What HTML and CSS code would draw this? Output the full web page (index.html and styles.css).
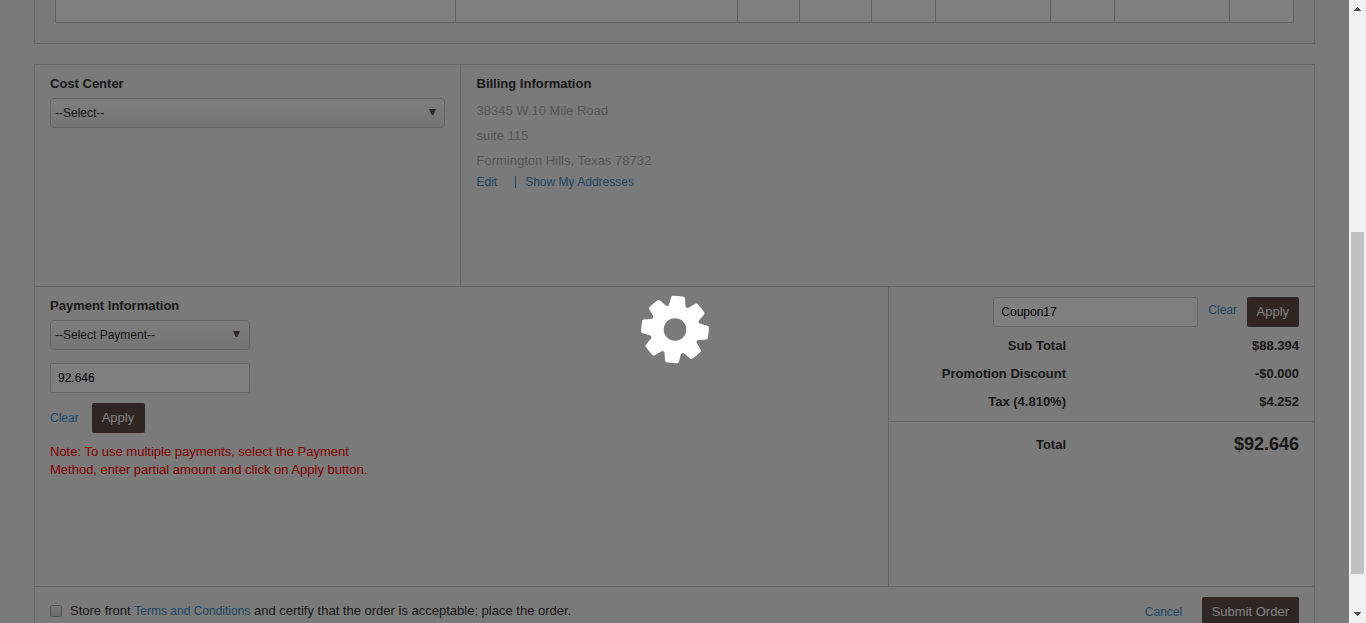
FILE: index.html
```html
<!DOCTYPE html>
<html lang="en">
<head>
<meta charset="utf-8">
<title>Checkout</title>
<link rel="stylesheet" href="styles.css">
</head>
<body>
<div class="window">
  <main class="page">
    <section class="items-panel">
      <div class="items-row"><i></i><i></i><i></i><i></i><i></i><i></i><i></i><i></i><i></i></div>
    </section>
    <section class="checkout">
      <div class="row-top">
        <div class="cost">
          <h2>Cost Center</h2>
          <div class="select"><span>--Select--</span><svg width="7" height="6" viewBox="0 0 7 6"><path d="M0 0H7L4.300 6H2.700Z" fill="#5f504c"/></svg></div>
        </div>
        <div class="billing">
          <h2>Billing Information</h2>
          <p>38345 W.10 Mile Road</p>
          <p>suite 115</p>
          <p>Formington Hills, Texas 78732</p>
          <div class="links"><a>Edit</a><span class="bar"></span><a>Show My Addresses</a></div>
        </div>
      </div>
      <div class="row-mid">
        <div class="payment">
          <h2>Payment Information</h2>
          <div class="select small"><span>--Select Payment--</span><svg width="7" height="6" viewBox="0 0 7 6"><path d="M0 0H7L4.300 6H2.700Z" fill="#5f504c"/></svg></div>
          <div class="field">92.646</div>
          <div class="actions"><a>Clear</a><span class="btn">Apply</span></div>
          <div class="note">Note: To use multiple payments, select the Payment<br>Method, enter partial amount and click on Apply button.</div>
        </div>
        <div class="totals">
          <div class="coupon"><div class="field">Coupon17</div><a>Clear</a><span class="btn">Apply</span></div>
          <div class="line"><span>Sub Total</span><b>$88.394</b></div>
          <div class="line"><span>Promotion Discount</span><b>-$0.000</b></div>
          <div class="line"><span>Tax (4.810%)</span><b>$4.252</b></div>
          <div class="line grand"><span>Total</span><b>$92.646</b></div>
        </div>
      </div>
      <div class="row-bottom">
        <span class="checkbox"></span>
        <div class="terms">Store front <a>Terms and Conditions</a> and certify that the order is acceptable; place the order.</div>
        <a class="cancel">Cancel</a>
        <span class="btn">Submit Order</span>
      </div>
    </section>
    <div class="overlay">
      <svg class="gear" width="70" height="70" viewBox="-35 -35.500 70 70">
        <defs>
          <path id="tooth" d="M-8.800 -22L-8 -25.500L-6.900 -32Q-6.600 -33.300 -5.300 -33.500Q0 -34 5.300 -33.500Q6.600 -33.300 6.900 -32L8 -25.500L8.800 -22Z"/>
          <mask id="hub"><rect x="-35" y="-36" width="70" height="71" fill="#fff"/><circle r="11.300" fill="#000"/></mask>
        </defs>
        <g fill="#fff" mask="url(#hub)">
          <circle r="25"/>
          <g transform="rotate(5.500)">
            <use href="#tooth"/>
            <use href="#tooth" transform="rotate(45)"/>
            <use href="#tooth" transform="rotate(90)"/>
            <use href="#tooth" transform="rotate(135)"/>
            <use href="#tooth" transform="rotate(180)"/>
            <use href="#tooth" transform="rotate(225)"/>
            <use href="#tooth" transform="rotate(270)"/>
            <use href="#tooth" transform="rotate(315)"/>
          </g>
        </g>
      </svg>
    </div>
  </main>
  <aside class="scrollbar">
    <svg width="7" height="4" viewBox="0 0 7 4" shape-rendering="crispEdges"><path d="M3 0h1v1h1v1h1v1h1v1H0V3h1V2h1V1h1z" fill="#505050"/></svg>
    <span class="thumb"></span>
    <svg width="7" height="4" viewBox="0 0 7 4" shape-rendering="crispEdges"><path d="M0 0h7v1H6v1H5v1H4v1H3V3H2V2H1V1H0z" fill="#505050"/></svg>
  </aside>
</div>
</body>
</html>
```
FILE: styles.css
```css
* { box-sizing: border-box; }
body {
  margin: 0;
  overflow: hidden;
  font: 13px/18px "Liberation Sans", Arial, sans-serif;
  color: #333;
}
.window { display: flex; height: 623px; overflow: hidden; }
.page {
  position: relative;
  width: 1349px;
  height: 623px;
  padding: 0 34px;
  overflow: hidden;
  background: #f5f5f5;
}
h2 { margin: 0; font-size: 13px; line-height: 18px; font-weight: bold; }
a { color: #428bca; font-size: 12px; }

.items-panel {
  height: 44px;
  padding: 0 20px;
  border: 1px solid #ccc;
  border-top: 0;
}
.items-row {
  display: grid;
  grid-template-columns: 400px 282px 62px 72px 64px 115px 64px 115px 64px;
  width: 1239px;
  height: 23px;
  background: #fff;
  border-left: 1px solid #c4c4c4;
  border-bottom: 1px solid #c4c4c4;
}
.items-row i { border-right: 1px solid #c4c4c4; }

.checkout { width: 1281px; margin-top: 20px; border: 1px solid #ccc; }
.row-top { display: flex; height: 221px; }
.cost { width: 426px; padding: 10px 15px; border-right: 1px solid #ccc; }
.billing { padding: 10px 15.500px; }
.billing p { margin: 0; line-height: 25px; color: #aaa; }
.billing h2 { margin-bottom: 5px; }
.links { display: flex; align-items: center; height: 18px; }
.bar { width: 1px; height: 12px; margin: 0 9px 0 18px; background: #428bca; }

.select {
  display: flex;
  justify-content: space-between;
  width: 395px;
  height: 30px;
  margin-top: 5px;
  padding: 0 8px 0 4px;
  border: 1px solid #c8c8c8;
  border-radius: 4px;
  background: linear-gradient(#fdfdfd, #e8e8e8);
  font-size: 12px;
  line-height: 28px;
}
.select svg { margin-top: 10px; }
.select.small { width: 200px; padding-right: 9px; }
.field {
  width: 200px;
  height: 30px;
  padding: 0 7px;
  border: 1px solid #ccc;
  border-radius: 2px;
  background: #fff;
  color: #000;
  font-size: 12px;
  line-height: 28px;
}
.btn {
  height: 30px;
  padding: 0 10px;
  border-radius: 2px;
  background: #5f4c48;
  color: #fff;
  font-size: 13px;
  line-height: 30px;
}

.row-mid { display: flex; height: 300px; border-top: 1px solid #ccc; }
.payment { width: 853px; padding: 10px 15px; }
.payment .field { margin-top: 13px; }
.payment .btn { width: 53px; }
.actions { display: flex; align-items: center; gap: 13px; margin: 10px 0; }
.note { color: #f00; }

.totals { width: 426px; padding-top: 10px; border-left: 1px solid #ccc; }
.coupon { display: flex; justify-content: flex-end; padding-right: 15px; margin-bottom: 5px; }
.coupon .field { width: 205px; margin-right: 10px; }
.coupon a { margin: 4px 10px 0 0; }
.coupon .btn { width: 52px; padding: 0 9.500px; }
.line {
  display: flex;
  align-items: center;
  justify-content: space-between;
  height: 28px;
  padding-right: 15px;
  font-weight: bold;
}
.line span { width: 177px; text-align: right; }
.line.grand { height: 46px; margin-top: 5px; border-top: 1px solid #ccc; }
.grand b { padding-bottom: 2px; font-size: 18px; }

.row-bottom { display: flex; height: 60px; padding: 10px 15px; border-top: 1px solid #ccc; }
.checkbox {
  width: 12px;
  height: 12px;
  margin: 8px 8px 0 0;
  border: 1px solid #a8a8a8;
  border-radius: 2px;
  background: linear-gradient(#eee, #ddd);
}
.terms { margin-top: 5px; }
.cancel { margin: 6px 19.500px 0 auto; }

.overlay { position: absolute; inset: 0; background: rgba(0, 0, 0, .5); }
.gear { position: absolute; left: 640px; top: 294px; }

.scrollbar {
  display: flex;
  flex-direction: column;
  align-items: center;
  width: 17px;
  height: 623px;
  padding-top: 7px;
  background: #f1f1f1;
}
.thumb { width: 13px; height: 342px; margin: 221px 0 38px; background: #c1c1c1; }
```
